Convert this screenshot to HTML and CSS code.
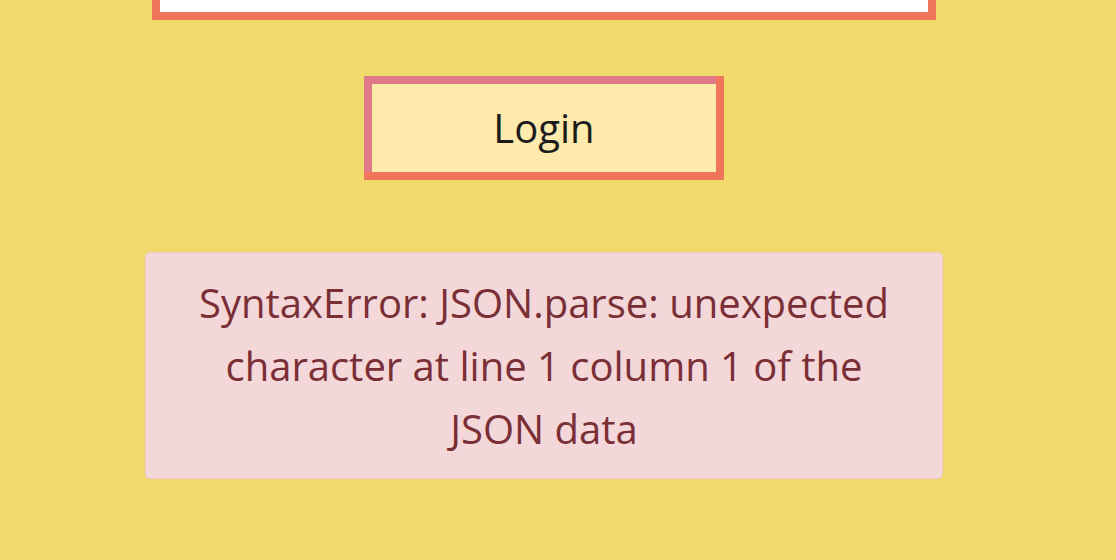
FILE: index.html
```html
<!DOCTYPE html>
<html lang="en">
<head>
<meta charset="utf-8">
<title>Login</title>
<link rel="stylesheet" href="styles.css">
</head>
<body>
<main class="page">
  <form class="login-form">
    <input class="field" type="password" aria-label="Password">
    <button class="login-btn" type="button">Login</button>
  </form>
  <div class="alert" role="alert">SyntaxError: JSON.parse: unexpected<br>character at line 1 column 1 of the<br>JSON data</div>
</main>
</body>
</html>
```

FILE: styles.css
```css
html, body {
  margin: 0;
  padding: 0;
  height: 100%;
  overflow: hidden;
  background: #f0da6c;
}

body {
  font-family: "Open Sans", "Noto Sans", sans-serif;
}

.page {
  width: 798px;
  margin-left: 145px;
  margin-top: -40px;
  display: flex;
  flex-direction: column;
  align-items: center;
}

.login-form {
  display: flex;
  flex-direction: column;
  align-items: center;
  width: 100%;
}

.field {
  box-sizing: border-box;
  display: block;
  width: 784px;
  height: 60px;
  margin: 0;
  padding: 0 16px;
  border: 8px solid #ef755c;
  background: #ffffff;
  outline: none;
  font: inherit;
}

.login-btn {
  box-sizing: border-box;
  margin-top: 56px;
  margin-left: -8px;
  width: 352px;
  height: 96px;
  padding: 0;
  border: none;
  border-top: 8px solid #df7a86;
  border-left: 8px solid #df7a86;
  background: #feeaab;
  box-shadow: 4px 4px 0 4px #ef755c;
  color: #1c1c1c;
  font-family: inherit;
  font-size: 40px;
  line-height: 1;
  padding-top: 0;
  cursor: pointer;
}

.alert {
  box-sizing: border-box;
  width: 798px;
  margin-top: 80px;
  padding: 18px 20px;
  border: 1px solid #f0c9cd;
  border-radius: 5px;
  background: #f3d7d9;
  color: #7a2f36;
  font-size: 40px;
  line-height: 63px;
  text-align: center;
}
```
